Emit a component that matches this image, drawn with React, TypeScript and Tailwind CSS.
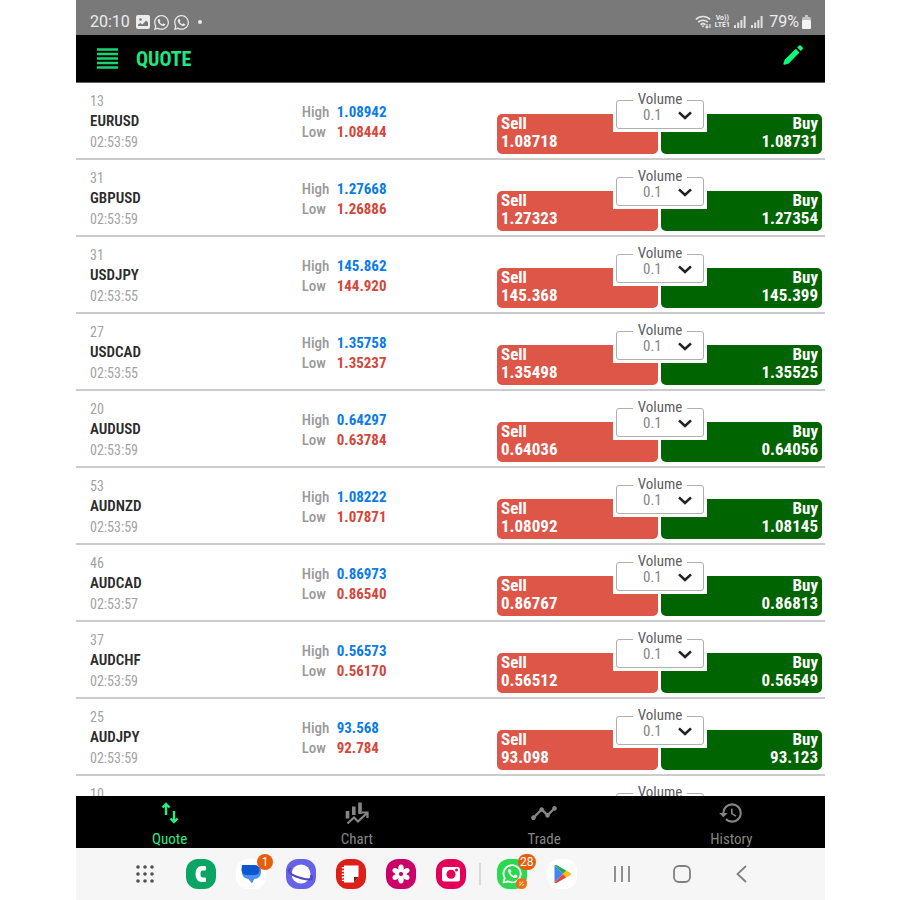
import React from "react";
import { FaWhatsapp } from "react-icons/fa";
import { MdTimeline, MdHistory } from "react-icons/md";

type Quote = {
  ticks: number;
  symbol?: string;
  time?: string;
  high?: string;
  low?: string;
  sell?: string;
  buy?: string;
};

const quotes: Quote[] = [
  { ticks: 13, symbol: "EURUSD", time: "02:53:59", high: "1.08942", low: "1.08444", sell: "1.08718", buy: "1.08731" },
  { ticks: 31, symbol: "GBPUSD", time: "02:53:59", high: "1.27668", low: "1.26886", sell: "1.27323", buy: "1.27354" },
  { ticks: 31, symbol: "USDJPY", time: "02:53:55", high: "145.862", low: "144.920", sell: "145.368", buy: "145.399" },
  { ticks: 27, symbol: "USDCAD", time: "02:53:55", high: "1.35758", low: "1.35237", sell: "1.35498", buy: "1.35525" },
  { ticks: 20, symbol: "AUDUSD", time: "02:53:59", high: "0.64297", low: "0.63784", sell: "0.64036", buy: "0.64056" },
  { ticks: 53, symbol: "AUDNZD", time: "02:53:59", high: "1.08222", low: "1.07871", sell: "1.08092", buy: "1.08145" },
  { ticks: 46, symbol: "AUDCAD", time: "02:53:57", high: "0.86973", low: "0.86540", sell: "0.86767", buy: "0.86813" },
  { ticks: 37, symbol: "AUDCHF", time: "02:53:59", high: "0.56573", low: "0.56170", sell: "0.56512", buy: "0.56549" },
  { ticks: 25, symbol: "AUDJPY", time: "02:53:59", high: "93.568", low: "92.784", sell: "93.098", buy: "93.123" },
  { ticks: 10 },
];

function VolumeSelect({ id }: { id: string }) {
  return (
    <div className="absolute right-[118px] top-[7px] h-[42px] w-[94px] bg-white px-[3px] pt-[10px]">
      <div className="relative h-[29px] rounded-[3px] border border-[#b0b0b0]">
        <label
          htmlFor={id}
          className="absolute -top-[10px] left-1/2 w-[54px] -translate-x-1/2 bg-white text-center text-[15px] leading-4 text-[#606060]"
        >
          Volume
        </label>
        <select
          id={id}
          defaultValue="0.1"
          className="h-full w-full appearance-none bg-transparent pl-[26px] text-[15px] leading-5 text-[#858585] outline-none"
        >
          <option value="0.1">0.1</option>
        </select>
        <svg viewBox="0 0 14 9" className="pointer-events-none absolute right-[11px] top-[10px] h-[9px] w-[14px]" fill="none" stroke="#222" strokeWidth="2.6">
          <path d="M1 1.4 7 7l6-5.600" />
        </svg>
      </div>
    </div>
  );
}

function QuoteRow({ quote, index }: { quote: Quote; index: number }) {
  return (
    <li className="grid h-[77px] shrink-0 grid-cols-[30%_1fr_328px] border-b-2 border-[#cbcbcb]">
      <div className="pl-[14px] pt-2 text-[14px] leading-5 text-[#a3a3a3]">
        <div>{quote.ticks}</div>
        {quote.symbol && <div className="text-[15px] font-semibold leading-[21px] text-[#2c2c2c]">{quote.symbol}</div>}
        {quote.time && <div>{quote.time}</div>}
      </div>
      {quote.high && (
        <dl className="grid grid-cols-[35px_1fr] content-start pl-px pt-[19px] text-[15px] font-bold leading-5">
          <dt className="font-medium text-[#9a9a9a]">High</dt>
          <dd className="text-[#0b7bea]">{quote.high}</dd>
          <dt className="font-medium text-[#9a9a9a]">Low</dt>
          <dd className="text-[#d5463b]">{quote.low}</dd>
        </dl>
      )}
      <div className="relative col-start-3 flex gap-[3px] pr-[3px] pt-[31px]">
        {quote.sell && (
          <>
            <button className="flex h-10 flex-1 flex-col items-start justify-center rounded-[5px] bg-[#de5648] px-1 pb-1 text-[17px] font-bold leading-[18px] text-white">
              <span>Sell</span>
              <span>{quote.sell}</span>
            </button>
            <button className="flex h-10 flex-1 flex-col items-end justify-center rounded-[5px] bg-[#006400] px-1 pb-1 text-[17px] font-bold leading-[18px] text-white">
              <span>Buy</span>
              <span>{quote.buy}</span>
            </button>
          </>
        )}
        <VolumeSelect id={`volume-${index}`} />
      </div>
    </li>
  );
}

function Signal() {
  return (
    <svg viewBox="0 0 12 12" className="h-3 w-3" fill="#e0e0e0">
      <path d="M0 9h2v3H0zM3.200 6.500h2V12h-2zM6.400 4h2v8h-2zM9.600 0h2v12h-2z" />
    </svg>
  );
}

function StatusBar() {
  return (
    <div className="flex h-[35px] shrink-0 items-center bg-[#797979] pl-[14px] pr-[14px] pt-[9px] font-['Roboto',sans-serif] text-[16px] leading-5 text-[#ececec]">
      <span>20:10</span>
      <svg viewBox="0 0 14 14" className="ml-[6px] mr-[2px] h-[14px] w-[14px]">
        <rect width="14" height="14" rx="2" fill="#ececec" />
        <circle cx="4.500" cy="4.500" r="1.300" fill="#797979" />
        <path d="M2 11V9.500l2.500-1.500 2 1.500L10 5.500l2 2V11z" fill="#797979" />
      </svg>
      <FaWhatsapp className="ml-px h-[17px] w-[17px]" />
      <FaWhatsapp className="ml-[3px] h-[17px] w-[17px]" />
      <span className="ml-2 h-1 w-1 rounded-full bg-[#ececec]" />
      <span className="flex-1" />
      <svg viewBox="0 0 17 14" className="h-[14px] w-[17px]" fill="none" stroke="#e4e4e4" strokeWidth="1.700">
        <path d="M.8 4.500c4-4 10.400-4 14.400 0M3.200 7.200c2.600-2.600 7-2.600 9.600 0M5.600 9.700c1.400-1.400 3.400-1.400 4.800 0" />
        <path d="m6.500 10.500 1.500 2 1.500-2z" fill="#e4e4e4" stroke="none" />
        <path d="M12 9v4m-1.500-1.500L12 13l1.500-1.500M15 13V9" strokeWidth="1.200" />
      </svg>
      <span className="ml-[2px] flex w-4 flex-col text-center text-[7px] font-bold leading-[7px]">
        <span>Vo))</span>
        <span>LTE1</span>
      </span>
      <span className="ml-1 flex gap-[5px]">
        <Signal />
        <Signal />
      </span>
      <span className="ml-[6px]">79%</span>
      <svg viewBox="0 0 9 14" className="ml-[3px] h-[14px] w-[9px]" fill="#f4f4f4">
        <path d="M3 0h3v2H3z" opacity=".6" />
        <rect y="2" width="9" height="12" rx="1.500" opacity=".6" />
        <rect y="5" width="9" height="9" rx="1.500" />
      </svg>
    </div>
  );
}

function Header() {
  return (
    <header className="flex h-12 shrink-0 items-center border-b border-[#606060] bg-black px-[21px] text-[#1fe783]">
      <button aria-label="Menu">
        <svg viewBox="0 0 21 21" className="h-[21px] w-[21px]" stroke="#17d575" strokeWidth="2.600">
          <path d="M0 1.500h21M0 6h21M0 10.500h21M0 15h21M0 19.500h21" />
        </svg>
      </button>
      <h1 className="ml-[18px] text-[20px] font-bold leading-6">QUOTE</h1>
      <span className="flex-1" />
      <button aria-label="Edit">
        <svg viewBox="0 0 22 22" className="mb-2 h-[22px] w-[22px]" fill="#08ff7b">
          <path d="m13.800 4.800 3.600 3.600L6.700 19.600l-3.800 1.200q-1.800.3-1.500-1.500l1.300-3.600z" />
          <path d="m15.200 3.400 1.600-1.600c.7-.7 1.500-.7 2.200 0l1.400 1.400c.7.700.7 1.500 0 2.200l-1.600 1.600z" />
        </svg>
      </button>
    </header>
  );
}

function TabBar() {
  const tabs = [
    {
      label: "Quote",
      icon: (
        <svg viewBox="0 0 24 24" className="h-6 w-6" fill="none" stroke="currentColor" strokeWidth="2.400">
          <path d="M8 14V3M4.500 6.500 8 3l3.500 3.500M16 10v11m-3.500-3.500L16 21l3.500-3.500" />
        </svg>
      ),
    },
    {
      label: "Chart",
      icon: (
        <svg viewBox="0 0 24 24" className="h-6 w-6" fill="none" stroke="currentColor">
          <path d="M2.500 10v7.500M8.800 5.500V14M15 1.500V13" strokeWidth="3.600" />
          <path d="m2.500 22.500 6.500-6 4 4L22 12M17 11.500h5.500V17" strokeWidth="2.200" />
        </svg>
      ),
    },
    { label: "Trade", icon: <MdTimeline className="h-7 w-7" /> },
    { label: "History", icon: <MdHistory className="h-[26px] w-[26px]" /> },
  ];
  return (
    <nav className="grid h-[52px] shrink-0 grid-cols-4 bg-black">
      {tabs.map((tab, i) => (
        <button key={tab.label} className={`flex flex-col items-center text-[15px] leading-4 ${i === 0 ? "text-[#24ee87]" : "text-[#858585]"}`}>
          <span className="flex h-[35px] items-center pb-[2px]">{tab.icon}</span>
          {tab.label}
        </button>
      ))}
    </nav>
  );
}

function AppButton({ label, color, badge, children }: { label: string; color: string; badge?: string; children: React.ReactNode }) {
  return (
    <button aria-label={label} className={`relative h-[30px] w-[30px] rounded-[12px] ${color}`}>
      <svg viewBox="0 0 30 30" className="h-[30px] w-[30px]">{children}</svg>
      {badge && (
        <span className="absolute -top-[5px] left-[21px] h-4 min-w-4 rounded-full bg-[#e85d0c] px-[2px] text-center font-['Roboto',sans-serif] text-[12px] leading-4 text-white">
          {badge}
        </span>
      )}
    </button>
  );
}

function SystemDock() {
  return (
    <div className="flex h-[52px] shrink-0 items-center bg-[#f6f6f6] pl-[54px]">
      <button aria-label="All apps" className="mr-[26px] h-[30px] w-[30px]">
        <svg viewBox="0 0 30 30" className="h-[30px] w-[30px]" fill="#505050">
          {[8, 15, 22].map((y) => [8, 15, 22].map((x) => <circle key={`${x}-${y}`} cx={x} cy={y} r="1.800" />))}
        </svg>
      </button>
      <div className="flex gap-[20px]">
        <AppButton label="Phone" color="bg-[#0aa565]">
          <path d="M19 7h-3.500C11.500 7 9.500 11 9.500 15s2 8 6 8H19q1 0 1-1v-2.500q0-1-1-1h-2.500c-1.500 0-2-1.500-2-3.500s.5-3.500 2-3.500H19q1 0 1-1V8q0-1-1-1z" fill="#fff" />
        </AppButton>
        <AppButton label="Messages" color="bg-white" badge="1">
          <path d="M9 8h13q3 0 3 3v2q0 7-8 7h-4q-7 0-7-7z" fill="#4c91f0" />
          <path d="M6 6h12.500q5 0 5 5t-5 5H11q-5.500 0-5.500-5.500z" fill="#0b57d0" />
          <path d="M11 18.500h8l-3 6z" fill="#4c91f0" />
        </AppButton>
        <AppButton label="Internet" color="bg-[#6663e9]">
          <circle cx="15" cy="15" r="9.500" fill="#fff" />
          <path d="M5 9c-5 3 0 7 8 9.500S29 22 25 16" fill="none" stroke="#5149bd" strokeWidth="2.200" />
        </AppButton>
        <AppButton label="Notes" color="bg-[#dc2019]">
          <path d="M8 6.500h14.500V18L18 23.500H8z" fill="#fff" />
          <path d="M18 23.500V18h4.500z" fill="#8f1511" />
          <path d="M7 8v14" stroke="#fff" strokeWidth="2.400" strokeDasharray="1.600 1.600" />
        </AppButton>
        <AppButton label="Gallery" color="bg-[#cb0068]">
          <g fill="#fff">
            {[0, 60, 120, 180, 240, 300].map((angle) => (
              <ellipse key={angle} cx="15" cy="9.500" rx="2.700" ry="4" transform={`rotate(${angle} 15 15)`} />
            ))}
          </g>
          <circle cx="15" cy="15" r="2" fill="#cb0068" />
        </AppButton>
        <AppButton label="Camera" color="bg-[#e40058]">
          <rect x="6" y="8" width="18" height="14.500" rx="2.500" fill="#fff" />
          <circle cx="15" cy="15.300" r="4.500" fill="#e40058" />
          <circle cx="20.500" cy="11" r="1.500" fill="#e40058" />
        </AppButton>
      </div>
      <span className="ml-[13px] mr-4 h-[22px] w-[2px] bg-[#dadada]" />
      <div className="flex gap-[20px]">
        <AppButton label="WhatsApp" color="bg-[#2bd850]" badge="28">
          <path d="m6.500 23.500 1.200-4.400A8.600 8.600 0 1 1 11 22.300z" fill="none" stroke="#fff" strokeWidth="1.800" strokeLinejoin="round" />
          <path d="M11.500 10.500c-2 2.200 3.500 9 7 8.500 2-.3 2.200-2 1.500-2.500l-2-1-1.500 1.300c-1.500-.6-2.500-1.800-3-3l1-1.300-.9-2q-1-1-2.100 0z" fill="#fff" />
          <circle cx="24.500" cy="24.500" r="5.500" fill="#f36c13" />
          <path d="m22.500 26.500 3.800-3.800M22.200 24l1.300-1.300M25.500 26.600l1.500-1.500" stroke="#ffd4b2" strokeWidth="1.200" />
        </AppButton>
        <AppButton label="Play Store" color="bg-white">
          <path d="M7.500 6.500v17l8.500-8.500z" fill="#4285f4" />
          <path d="M7.500 6.500 16 15l3.500-3.300-10-5.700q-1.200-.5-2 .5z" fill="#27a75a" />
          <path d="M7.500 23.500 16 15l3.500 3.300-10 5.700q-1.200.5-2-.5z" fill="#ea4335" />
          <path d="m16 15 3.500-3.300 4 2.300q1.500 1 0 2l-4 2.300z" fill="#fbbc04" />
        </AppButton>
      </div>
      <div className="ml-[30px] flex gap-[30px]">
        <button aria-label="Recent apps">
          <svg viewBox="0 0 30 30" className="h-[30px] w-[30px]" stroke="#858585" strokeWidth="1.800">
            <path d="M8 7v16M15 7v16M22 7v16" />
          </svg>
        </button>
        <button aria-label="Home">
          <svg viewBox="0 0 30 30" className="h-[30px] w-[30px]" fill="none" stroke="#808080" strokeWidth="1.800">
            <rect x="7" y="7" width="16" height="16" rx="5" />
          </svg>
        </button>
        <button aria-label="Back">
          <svg viewBox="0 0 30 30" className="h-[30px] w-[30px]" fill="none" stroke="#808080" strokeWidth="1.800">
            <path d="m19 7-8.500 8 8.500 8" />
          </svg>
        </button>
      </div>
    </div>
  );
}

export default function App() {
  return (
    <div className="h-screen bg-white pl-[76px] pr-[75px] font-['Roboto_Condensed','Liberation_Sans_Narrow',Roboto,sans-serif]">
      <div className="flex h-full flex-col">
        <StatusBar />
        <Header />
        <main className="min-h-0 flex-1 overflow-hidden">
          <ul className="flex flex-col">
            {quotes.map((quote, i) => (
              <QuoteRow key={i} quote={quote} index={i} />
            ))}
          </ul>
        </main>
        <TabBar />
        <SystemDock />
      </div>
    </div>
  );
}
